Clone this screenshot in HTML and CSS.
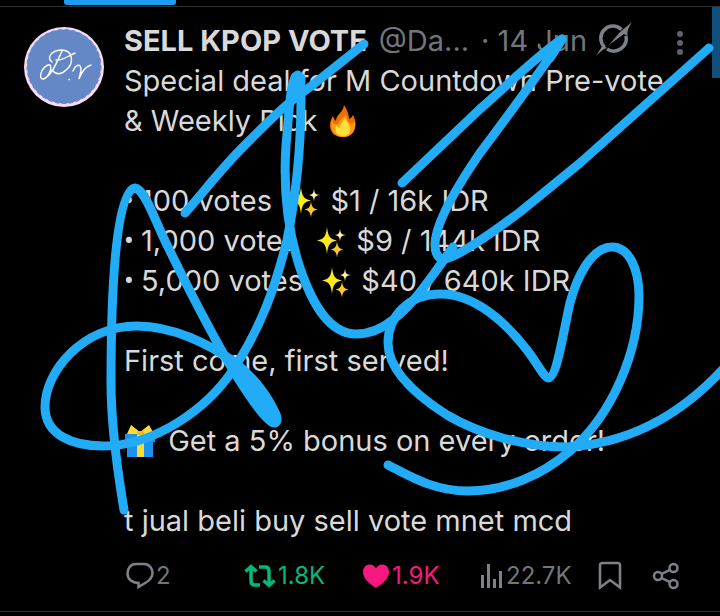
FILE: index.html
```
<!DOCTYPE html>
<html lang="en">
<head>
    <meta charset="UTF-8">
    <meta name="viewport" content="width=device-width, initial-scale=1.0">
    <title>Post</title>
    <link rel="stylesheet" href="styles.css">
</head>
<body>
    <!-- shared shapes -->
    <svg class="defs" aria-hidden="true">
        <symbol id="sparkles" viewBox="0 0 32 32">
            <path fill="#ffe81c" d="M11 2C12 10 13 14 21 15.500C13 17 12 21 11 29C10 21 9 17 1 15.500C9 14 10 10 11 2Z"/>
            <path fill="#fff2a6" d="M24 3.500C24.500 8 25 9.500 30 10C25 10.700 24.500 12 24 16.500C23.500 12 23 10.700 18.500 10C23 9.500 23.500 8 24 3.500Z"/>
            <path fill="#ffc52e" d="M21 16C21.500 21 22.500 23.500 27.500 24.500C22.500 25.500 21.500 28 21 33C20.500 28 19.500 25.500 14.500 24.500C19.500 23.500 20.500 21 21 16Z"/>
        </symbol>
    </svg>

    <div class="page">
        <div class="tab-indicator"></div>
        <article class="post">
            <svg class="avatar" viewBox="0 0 80 80" role="img" aria-label="D.r">
                <circle cx="40" cy="40" r="40" fill="#f9daf5"/>
                <circle cx="40" cy="39.500" r="37" fill="#6488c5" stroke="#6488c5" stroke-dasharray="4 3"/>
                <g fill="none" stroke="#fff" stroke-width="1.400" stroke-linecap="round">
                    <path d="M38 24C33 35 27 50 19 52C14 52 17 41 24 38C29 36 27 48 20 52"/>
                    <path d="M28 35C23 31 26 24 37 23C50 23 50 37 42 43C37 48 32 48 28 43M32 33C38 34 44 29 51 26"/>
                    <path d="M45 52.500L45.500 52.500M49 44C52 37 57 36 57 43L55 52C57 46 61 40 67 38"/>
                </g>
            </svg>
            <div class="content">
                <header class="post-header">
                    <strong class="name">SELL KPOP VOTE</strong>
                    <span class="handle">@Da...</span>
                    <span class="date">· 14 Jun</span>
                    <button class="icon-button grok" aria-label="Grok">
                        <svg width="38" height="36" viewBox="0 0 38 36">
                            <path d="M9.500 26A12 12 0 0 1 26.500 8.500M31 15A12.500 12.500 0 0 1 12 28" fill="none" stroke="#7c8288" stroke-width="3.500"/>
                            <path d="M1 35C4 30 6 27 8 24L12 27C8 28 4 32 1 35ZM37 1C34 6 32 9 32.500 15L29 13L14 24L25 11Z" fill="#7c8288"/>
                        </svg>
                    </button>
                    <button class="icon-button more" aria-label="More">
                        <svg width="8" height="26" viewBox="0 0 8 26" fill="#606367">
                            <circle cx="4" cy="4" r="3"/><circle cx="4" cy="13" r="3"/><circle cx="4" cy="22" r="3"/>
                        </svg>
                    </button>
                </header>

                <div class="text">
                    <p>Special deal for M Countdown Pre-vote<br>&amp; Weekly Pick
                        <svg class="emoji flame" viewBox="0 0 32 32">
                            <path fill="#f36c00" d="M17 0C20 5 22 9 22 14C24 13 25 12 26 10C31 19 29 32 16 32C3 32 0 20 6 11C7 14 8 15 9 16C9 9 16 8 17 0Z"/>
                            <path fill="#ff9a16" d="M5 15C6 19 9 20 11 19C12 14 17 13 19 9C20 15 21 18 25 19L28 16C29 26 24 32 16 32C6 32 3 24 5 15Z"/>
                            <path fill="#ffe03a" d="M18 12C20 18 24 21 23 26C22 30 19 31 16 31C9 31 7 25 9 20C11 23 12 23 13 22C13 18 17 17 18 12Z"/>
                        </svg>
                    </p>
                    <ul>
                        <li><span class="bullet">• </span>100 votes <svg class="emoji sparkles" viewBox="0 0 32 32"><use href="#sparkles"/></svg> $1 / 16k IDR</li>
                        <li><span class="bullet">• </span>1,000 votes <svg class="emoji sparkles" viewBox="0 0 32 32"><use href="#sparkles"/></svg> $9 / 144k IDR</li>
                        <li><span class="bullet">• </span>5,000 votes <svg class="emoji sparkles" viewBox="0 0 32 32"><use href="#sparkles"/></svg> $40 / 640k IDR</li>
                    </ul>
                    <p>First come, first served!</p>
                    <p>
                        <svg class="emoji gift" viewBox="0 0 32 32">
                            <path fill="#1b91f0" d="M1 9H31V17H29V32H3V17H1Z"/>
                            <path fill="#ffda32" d="M13 9H20V32H13ZM3 9L7 0L16 7L25 0L30 9H19L16 7L13 9Z"/>
                            <path fill="#f2b91f" d="M13 6H20V10H13Z"/>
                        </svg>
                        Get a 5% bonus on every order!</p>
                    <p>t jual beli buy sell vote mnet mcd</p>
                </div>

                <footer class="actions">
                    <button class="action reply">
                        <svg width="28" height="28" viewBox="0 0 28 28" fill="none" stroke="#7c8288" stroke-width="2.500">
                            <path d="M10 2H18C23 2 26.500 6 26.500 11C26.500 15 24 18 20 20.500L12.500 25V21C6 21 1.500 17 1.500 11.500C1.500 6 5 2 10 2Z"/>
                        </svg>
                        <span>2</span>
                    </button>
                    <button class="action repost">
                        <svg width="32" height="26" viewBox="0 0 32 26" fill="none" stroke="#00ba7c" stroke-width="3.500">
                            <path d="M1.500 8.500L7 3.500L12.500 8.500M7 4V18Q7 22 11 22H16M15 4H21Q25 4 25 8V22M19.500 17.500L25 22.500L30.500 17.500"/>
                        </svg>
                        <span>1.8K</span>
                    </button>
                    <button class="action like">
                        <svg width="28" height="26" viewBox="0 0 28 26">
                            <path fill="#f91880" d="M14 25C6 20 1 14.500 1 9C1 4.500 4 1.500 7.500 1.500C10.500 1.500 12.800 3 14 5.500C15.200 3 17.500 1.500 20.500 1.500C24 1.500 27 4.500 27 9C27 14.500 22 20 14 25Z"/>
                        </svg>
                        <span>1.9K</span>
                    </button>
                    <button class="action views">
                        <svg width="24" height="26" viewBox="0 0 24 26" fill="#7c8288">
                            <path d="M1 12H4V25H1ZM7 1H10V25H7ZM13 16H16V25H13ZM19 8H22V25H19Z"/>
                        </svg>
                        <span>22.7K</span>
                    </button>
                    <button class="action bookmark" aria-label="Bookmark">
                        <svg width="24" height="30" viewBox="0 0 24 30" fill="none" stroke="#7c8288" stroke-width="2.500">
                            <path d="M2 4.500Q2 2 4.500 2H19.500Q22 2 22 4.500V26.500L12 19L2 26.500Z"/>
                        </svg>
                    </button>
                    <button class="action share" aria-label="Share">
                        <svg width="28" height="28" viewBox="0 0 28 28" fill="none" stroke="#7c8288" stroke-width="2.500">
                            <circle cx="6" cy="14" r="4"/><circle cx="21.500" cy="6" r="4"/><circle cx="21.500" cy="22" r="4"/>
                            <path d="M9.500 12L18 7.800M9.500 16L18 20.200"/>
                        </svg>
                    </button>
                </footer>
            </div>
        </article>
        <div class="side-marker"></div>

        <!-- hand-drawn marker lines over the post -->
        <svg class="scribble" viewBox="0 0 720 616" aria-hidden="true">
            <path d="M364 44L310 87C286 103 262 128 243 147C220 170 202 194 185 213"/>
            <path d="M124 510C120 485 111 435 111 382C111 310 114 189 135 188C146 190 155 222 168 247C188 288 214 338 234 372C250 397 264 418 272 422C275 424 278 422 276 415C269 397 252 375 233 361C210 345 174 326 137 326C83 326 45 371 45 407C45 435 73 446 103 446C154 446 206 410 233 370C261 328 276 285 287 240C295 201 301 150 301 98C301 86 300 75 298 75C290 76 289 115 286 145C283 190 287 229 300 268C313 306 330 334 356 334C370 334 383 328 394 319C412 305 427 283 438 268L453 247"/>
            <path d="M402 183L480 109C512 81 539 54 562 39C543 68 507 117 480 153C458 185 435 223 435 245C435 254 439 260 445 259C460 256 496 230 520 212L580 163L709 48"/>
            <path d="M388 465C406 474 432 491 468 491C506 491 542 475 570 451C612 415 639 352 639 296C639 269 629 247 612 247C592 247 577 276 570 303C563 333 557 378 548 378C544 377 539 366 527 350C504 320 473 294 441 294C408 294 388 317 388 343C388 369 414 394 447 415C481 435 526 447 566 447C628 444 681 415 724 368"/>
            <path class="blot" d="M233 366C250 379 270 402 276 415C279 423 274 426 269 419Z"/>
            <path class="blot" d="M295 77L301 78L300 98L291 98ZM547 55L562 39L550 58Z"/>
        </svg>
    </div>
</body>
</html>
```
FILE: styles.css
```
* {
    margin: 0;
    padding: 0;
    box-sizing: border-box;
}

body {
    font-family: 'Inter', 'Roboto', 'Liberation Sans', sans-serif;
    font-size: 29px;
    line-height: 40px;
    background-color: #000;
    color: #d9d9d9;
}

button {
    font: inherit;
    color: inherit;
    background: none;
    border: none;
    cursor: pointer;
}

.defs {
    position: absolute;
    width: 0;
    height: 0;
}

.page {
    position: relative;
    min-height: 100vh;
    overflow: hidden;
}

.tab-indicator {
    width: 112px;
    height: 5px;
    margin: 0 0 1px 64px;
    background-color: #1d9bf0;
    border-radius: 0 0 3px 3px;
}

.post {
    display: flex;
    gap: 20px;
    padding: 14px 36px 15px 24px;
    border-top: 1px solid #2f3336;
    border-bottom: 1px solid #2f3336;
}

.avatar {
    flex: none;
    width: 80px;
    height: 80px;
    margin-top: 6px;
}

.content {
    flex: 1;
    min-width: 0;
}

.post-header {
    display: flex;
    align-items: center;
    height: 40px;
    white-space: nowrap;
}

.name {
    font-weight: 700;
}

.handle,
.date {
    color: #71767b;
}

.handle {
    margin-left: 12px;
}

.date {
    margin-left: 12px;
}

.icon-button {
    display: flex;
}

.grok {
    margin-left: 8px;
    margin-bottom: 4px;
}

.more {
    margin-left: auto;
    margin-top: 4px;
}

.text {
    display: flex;
    flex-direction: column;
    gap: 40px;
    white-space: nowrap;
}

.text ul {
    list-style: none;
}

.bullet {
    font-family: 'Roboto', sans-serif;
}

.emoji {
    width: 32px;
    height: 32px;
    margin: 0 2px;
    vertical-align: -6px;
}

.sparkles {
    margin: 0 0 0 10px;
    overflow: visible;
}

.gift {
    margin: 0 4px 0 0;
}

.actions {
    display: grid;
    grid-template-columns: repeat(4, 1fr) 54px auto;
    align-items: center;
    height: 40px;
    margin-top: 15px;
    padding: 0 4px 0 2px;
    font-size: 24px;
    color: #71767b;
}

.action {
    display: flex;
    align-items: center;
    gap: 2px;
}

.repost {
    color: #00ba7c;
}

.like {
    color: #f91880;
}

.side-marker {
    position: absolute;
    top: 7px;
    right: 0;
    width: 8px;
    height: 71px;
    background-color: #11507d;
}

.scribble {
    position: absolute;
    top: 0;
    left: 0;
    width: 100%;
    fill: none;
    stroke: #22acf7;
    stroke-width: 9;
    stroke-linecap: round;
    stroke-linejoin: round;
    pointer-events: none;
}

.blot {
    fill: #22acf7;
}
```
